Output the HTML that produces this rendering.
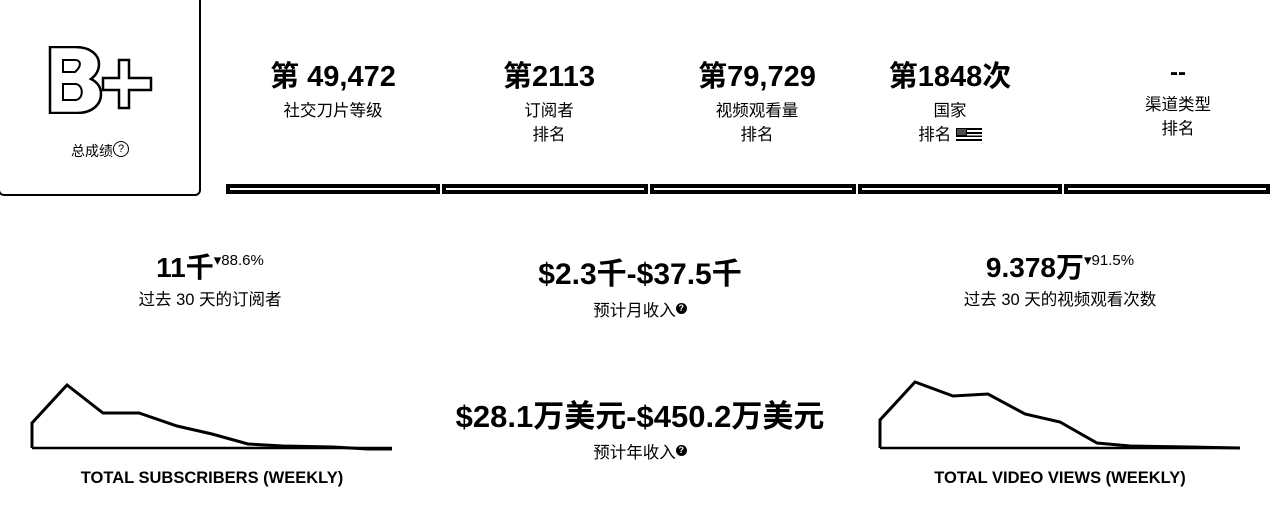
<!DOCTYPE html>
<html><head><meta charset="utf-8"><style>
body{margin:0;width:1280px;height:523px;background:#fff;font-family:"Liberation Sans","Noto Sans CJK SC",sans-serif;color:#000;position:relative;overflow:hidden}
.a{position:absolute;text-align:center}
.big{font-weight:bold;font-size:29px;line-height:34px}
.s{font-size:16.5px;line-height:24px}
.bar{position:absolute;top:184px;height:10px;background:#000}
.bar i{position:absolute;left:4px;right:4px;top:4px;height:2px;background:#fff}
.q{display:inline-block;width:11px;height:11px;border-radius:50%;background:#000;color:#fff;font-size:9px;line-height:11px;font-weight:bold;vertical-align:5px;text-align:center}
</style></head><body>
<div style="position:absolute;left:-2px;top:-2px;width:199px;height:194px;border:2px solid #000;border-radius:0 0 6px 6px"></div>
<div class="a" style="left:47px;top:46px;width:108px;height:68px">
<svg width="108" height="68" viewBox="0 0 108 68"><path d="M3 1H28C45 1 52 10 52 18C52 25 48 30 44 33C50 36 54 41 54 48C54 58 46 67 30 67H3Z" fill="none" stroke="#000" stroke-width="2.5"/><path d="M16 14H28C34 14 35 20 28 26H16Z M16 38H28C37 38 37 54 28 54H16Z" fill="none" stroke="#000" stroke-width="2"/><path d="M72 14H82V32H104V44H82V62H72V44H56V32H72Z" fill="none" stroke="#000" stroke-width="2.5"/></svg></div>
<div class="a s" style="left:55px;top:139px;width:90px;font-size:14px">总成绩<span style="display:inline-block;width:14px;height:14px;border:1.5px solid #000;border-radius:50%;font-size:11px;line-height:14px;vertical-align:4px">?</span></div>

<div class="a" style="left:230px;top:60px;width:206px"><div class="big">第 49,472</div><div class="s" style="margin-top:5px">社交刀片等级</div></div>
<div class="a" style="left:446px;top:60px;width:206px"><div class="big">第2113</div><div class="s" style="margin-top:5px">订阅者<br>排名</div></div>
<div class="a" style="left:654px;top:60px;width:206px"><div class="big">第79,729</div><div class="s" style="margin-top:5px">视频观看量<br>排名</div></div>
<div class="a" style="left:862px;top:60px;width:176px"><div class="big">第1848次</div><div class="s" style="margin-top:5px">国家<br>排名 <svg width="26" height="13" style="vertical-align:-1px"><rect width="26" height="13" fill="#000"/><rect x="11" y="2" width="15" height="2" fill="#fff"/><rect x="11" y="6" width="15" height="1.5" fill="#fff"/><rect x="0" y="9" width="26" height="2" fill="#fff"/><rect x="1" y="1" width="9" height="6" fill="#fff" opacity=".3"/></svg></div></div>
<div class="a" style="left:1078px;top:56px;width:200px"><div class="big" style="font-size:24px">--</div><div class="s" style="margin-top:3px">渠道类型<br>排名</div></div>

<div class="bar" style="left:226px;width:214px"><i></i></div>
<div class="bar" style="left:442px;width:206px"><i></i></div>
<div class="bar" style="left:650px;width:206px"><i></i></div>
<div class="bar" style="left:858px;width:204px"><i></i></div>
<div class="bar" style="left:1064px;width:206px"><i></i></div>

<div class="a" style="left:110px;top:251px;width:200px"><span class="big" style="font-size:28px">11千</span><span style="font-size:15px;vertical-align:12px">▾88.6%</span><div class="s" style="margin-top:3px">过去 30 天的订阅者</div></div>
<div class="a" style="left:470px;top:258px;width:340px"><div class="big" style="font-size:30px">$2.3千-$37.5千</div><div class="s" style="margin-top:7px">预计月收入<span class="q">?</span></div></div>
<div class="a" style="left:930px;top:251px;width:260px"><span class="big" style="font-size:28px">9.378万</span><span style="font-size:15px;vertical-align:12px">▾91.5%</span><div class="s" style="margin-top:3px">过去 30 天的视频观看次数</div></div>

<div class="a" style="left:400px;top:400px;width:480px"><div class="big" style="font-size:31px">$28.1万美元-$450.2万美元</div><div class="s" style="margin-top:7px">预计年收入<span class="q">?</span></div></div>

<svg style="position:absolute;left:0;top:0" width="1280" height="523">
<polyline points="32,448 32,423 67,385 103,413 139,413 177,426 212,434 248,444 283,446 333,447 368,449 392,449" fill="none" stroke="#000" stroke-width="3"/>
<line x1="32" y1="448" x2="392" y2="448" stroke="#000" stroke-width="2.5"/>
<polyline points="880,448 880,420 915,382 953,396 988,394 1025,414 1060,422 1097,443 1130,446 1190,447 1240,448" fill="none" stroke="#000" stroke-width="3"/>
<line x1="880" y1="448" x2="1240" y2="448" stroke="#000" stroke-width="2.5"/>
</svg>
<div class="a" style="left:12px;top:469px;width:400px;font-weight:bold;font-size:16.5px">TOTAL SUBSCRIBERS (WEEKLY)</div>
<div class="a" style="left:860px;top:469px;width:400px;font-weight:bold;font-size:16.5px">TOTAL VIDEO VIEWS (WEEKLY)</div>
</body></html>
